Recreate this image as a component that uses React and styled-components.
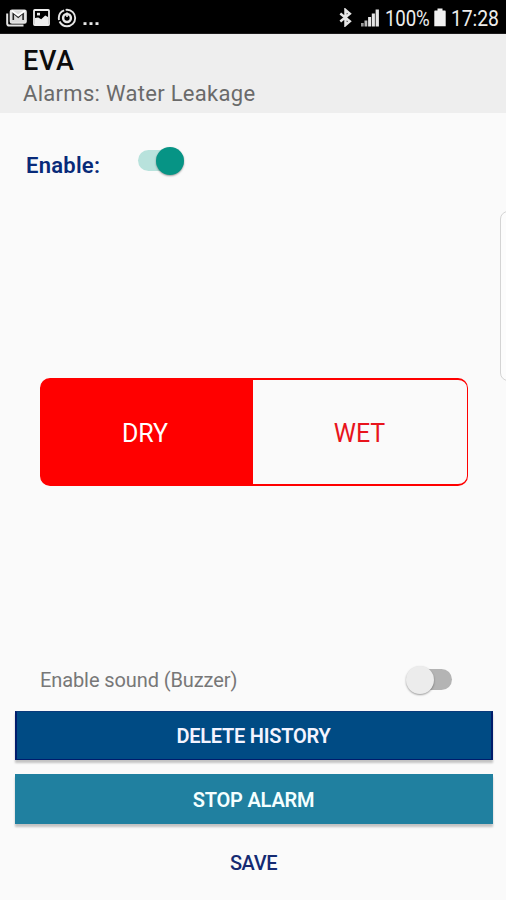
import React from "react";
import styled, { createGlobalStyle } from "styled-components";

const GlobalStyle = createGlobalStyle`
  * { box-sizing: border-box; }
  html, body { margin: 0; background: #fafafa; }
  body { font-family: Roboto, "Liberation Sans", sans-serif; }
  button { font: inherit; border: 0; padding: 0; margin: 0; }
`;

const Screen = styled.div`
  position: relative;
  display: flex;
  flex-direction: column;
  width: 506px;
  height: 900px;
  overflow: hidden;
  background: #fafafa;
`;

const StatusBar = styled.div`
  display: flex;
  align-items: center;
  justify-content: space-between;
  height: 34px;
  padding: 2px 8px 0 6px;
  background: #000;
  color: #ececec;
  border-bottom: 1px solid #1c1a1b;
`;

const StatusGroup = styled.div`
  display: flex;
  align-items: center;
`;

const StatusText = styled.span`
  width: ${(p) => p.$width}px;
  font-size: 21.5px;
  line-height: 32px;
  padding-top: 2px;
  letter-spacing: ${(p) => p.$spacing || 0}px;
  margin-left: ${(p) => p.$left || 0}px;
  white-space: nowrap;
  transform: scaleX(${(p) => p.$squeeze});
  transform-origin: left center;
`;

const Icon = styled.svg`
  display: block;
  flex: none;
  margin-left: ${(p) => p.$left || 0}px;
`;

const Header = styled.header`
  height: 79px;
  padding: 11px 23px 0;
  background: #eeeeee;
`;

const Title = styled.h1`
  margin: 0;
  font-size: 27px;
  line-height: 32px;
  font-weight: 500;
  letter-spacing: 0.7px;
  color: #0c0c0c;
`;

const Subtitle = styled.div`
  font-size: 22px;
  line-height: 33px;
  letter-spacing: 0.3px;
  color: #6a6a6a;
`;

const EnableRow = styled.div`
  display: flex;
  align-items: flex-start;
  height: 265px;
  padding: 33px 26px 0;
`;

const EnableLabel = styled.label`
  width: 112px;
  padding-top: 7px;
  font-size: 22px;
  line-height: 26px;
  font-weight: 600;
  letter-spacing: 0.25px;
  color: #082a79;
`;

const Switch = styled.div`
  display: flex;
  align-items: center;
  justify-content: ${(p) => (p.$on ? "flex-end" : "flex-start")};
  width: 46px;
  height: 21px;
  margin-top: ${(p) => p.$top || 0}px;
  border-radius: 11px;
  background: ${(p) => (p.$on
    ? "#b8e2dc"
    : "linear-gradient(90deg, transparent 14px, #b4b4b4 14px)")};
`;

const Thumb = styled.span`
  flex: none;
  width: 28px;
  height: 28px;
  border-radius: 50%;
  background: ${(p) => (p.$on ? "#069485" : "#ececec")};
  box-shadow: 0 1px 2px rgba(0, 0, 0, 0.38);
`;

const Segmented = styled.div`
  display: grid;
  grid-template-columns: 212px 1fr;
  width: 428px;
  height: 108px;
  margin-left: 40px;
  border: solid #ff0000;
  border-width: 2px 1px;
  border-radius: 10px;
  background: linear-gradient(90deg, #ff0000 212px, transparent 212px) border-box;
  overflow: hidden;
`;

const Segment = styled.button`
  padding-top: 2px;
  padding-right: ${(p) => p.$shift}px;
  font-size: 25px;
  background: ${(p) => (p.$active ? "#ff0000" : "transparent")};
  color: ${(p) => (p.$active ? "#fff" : "#e8141c")};
`;

const SoundRow = styled.div`
  display: flex;
  align-items: center;
  justify-content: space-between;
  height: 61px;
  margin-top: 163px;
  margin-bottom: 1px;
  padding: 0 54px 0 40px;
`;

const SoundLabel = styled.label`
  font-size: 20px;
  letter-spacing: -0.1px;
  padding-top: 1px;
  color: #777;
`;

const Actions = styled.div`
  display: flex;
  flex-direction: column;
  gap: 14px;
  padding: 0 13.5px 0 14.5px;
`;

const ActionButton = styled.button`
  height: ${(p) => p.$height}px;
  padding-top: 1px;
  font-size: 20px;
  font-weight: ${(p) => p.$weight || 600};
  letter-spacing: ${(p) => p.$spacing || 0}px;
  color: ${(p) => p.$color};
  background: ${(p) => p.$fill || "transparent"};
  border: ${(p) => (p.$edge ? `solid ${p.$edge}` : "0")};
  border-width: ${(p) => (p.$edge ? "1px 2px" : "0")};
  border-top-color: #0a3b7c;
  box-shadow: ${(p) => (p.$fill ? "0 3px 2px rgba(0, 0, 0, 0.22)" : "none")};
`;

const EdgeHandle = styled.div`
  position: absolute;
  right: -12px;
  top: 211px;
  width: 18px;
  height: 170px;
  border: 1px solid #d4d4d4;
  border-radius: 8px;
  background: #fcfcfc;
`;

const Toggle = ({ on, top }) => (
  <Switch $on={on} $top={top} role="switch" aria-checked={on}>
    <Thumb $on={on} />
  </Switch>
);

const MailIcon = () => (
  <Icon width="21" height="18" viewBox="0 0 21 18" fill="none" stroke="#e6e6e6">
    <path d="M1.2 4.5V14.5Q1.2 16.6 3.2 16.6H17.5" strokeWidth="2" />
    <rect x="4.5" y="1.2" width="15.5" height="12.8" rx="1.5" fill="#dcdcdc" strokeWidth="1.6" />
    <path d="M7.3 11V3.8L12.2 8.2L17.1 3.8V11" stroke="#222" strokeWidth="1.6" />
    <path d="M5.8 1.8L12.2 6.6L18.8 1.8" stroke="#fff" strokeWidth="1.8" />
  </Icon>
);

const PhotoIcon = () => (
  <Icon width="17" height="17" viewBox="0 0 17 17" $left={6}>
    <rect x="1" y="1" width="15" height="15" rx="0.8" fill="#000" stroke="#eee" strokeWidth="1.8" />
    <path d="M2 13V9L5.2 8.6L8.2 10.2L12.2 6.4L15 8V13Z" fill="#eee" />
    <rect x="4" y="3.8" width="3" height="2.6" fill="#eee" />
    <path d="M2 12.5H15V15H2Z" fill="#eee" />
  </Icon>
);

const TargetIcon = () => (
  <Icon width="20" height="20" viewBox="0 0 20 20" fill="none" stroke="#e6e6e6" $left={7}>
    <circle cx="10" cy="10" r="8.2" strokeWidth="1.9" strokeDasharray="22 1.5 12 1.5" />
    <circle cx="10" cy="10" r="3.9" strokeWidth="2.5" />
    <path d="M10 4.5V9" strokeWidth="1.6" />
  </Icon>
);

const DotsIcon = () => (
  <Icon width="17" height="18" viewBox="0 0 17 18" fill="#e6e6e6" $left={6}>
    <rect x="0.5" y="13.2" width="3" height="2.8" />
    <rect x="6.5" y="13.2" width="3" height="2.8" />
    <rect x="12.5" y="13.2" width="3" height="2.8" />
  </Icon>
);

const BluetoothIcon = () => (
  <Icon width="13" height="19" viewBox="0 0 13 19" fill="none" stroke="#e6e6e6" strokeWidth="2.5">
    <path d="M1.3 5.6L10.8 13.2L6.5 17V2L10.8 5.8L1.3 13.4" />
  </Icon>
);

const SignalIcon = () => (
  <Icon width="18" height="18" viewBox="0 0 18 18" fill="#e6e6e6" $left={9}>
    <rect x="0" y="14" width="2.7" height="3.5" fill="#999" />
    <rect x="3.5" y="11.5" width="2.8" height="6" fill="#bbb" />
    <rect x="7.1" y="8" width="3" height="9.5" />
    <rect x="10.8" y="4.5" width="3.1" height="13" />
    <rect x="14.6" y="0.5" width="3.3" height="17" />
  </Icon>
);

const BatteryIcon = () => (
  <Icon width="12" height="19" viewBox="0 0 12 19" fill="#f2f2f2" $left={4}>
    <path d="M3.5 0.5H8.5V2.5H11Q11.7 2.5 11.7 3.5V18.3H0.3V3.5Q0.3 2.5 1 2.5H3.5Z" />
  </Icon>
);

export default function App() {
  return (
    <>
      <GlobalStyle />
      <Screen>
        <StatusBar>
          <StatusGroup>
            <MailIcon />
            <PhotoIcon />
            <TargetIcon />
            <DotsIcon />
          </StatusGroup>
          <StatusGroup>
            <BluetoothIcon />
            <SignalIcon />
            <StatusText $left={6} $width={45} $squeeze={0.87} $spacing={-0.2}>100%</StatusText>
            <BatteryIcon />
            <StatusText $left={5} $width={47} $squeeze={0.9} $spacing={-0.1}>17:28</StatusText>
          </StatusGroup>
        </StatusBar>
        <Header>
          <Title>EVA</Title>
          <Subtitle>Alarms: Water Leakage</Subtitle>
        </Header>
        <EnableRow>
          <EnableLabel>Enable:</EnableLabel>
          <Toggle on top={4} />
        </EnableRow>
        <Segmented>
          <Segment $active $shift={4}>DRY</Segment>
          <Segment $shift={1}>WET</Segment>
        </Segmented>
        <SoundRow>
          <SoundLabel>Enable sound (Buzzer)</SoundLabel>
          <Toggle on={false} />
        </SoundRow>
        <Actions>
          <ActionButton $height={49} $fill="#004b84" $edge="#001c6c" $color="#f4f4ff" $spacing={-0.25}>DELETE HISTORY</ActionButton>
          <ActionButton $height={50} $fill="#2080a0" $color="#f4ffff" $spacing={-0.2}>STOP ALARM</ActionButton>
          <ActionButton $height={48} $color="#142a72" $weight={500} $spacing={-0.4}>SAVE</ActionButton>
        </Actions>
        <EdgeHandle />
      </Screen>
    </>
  );
}
